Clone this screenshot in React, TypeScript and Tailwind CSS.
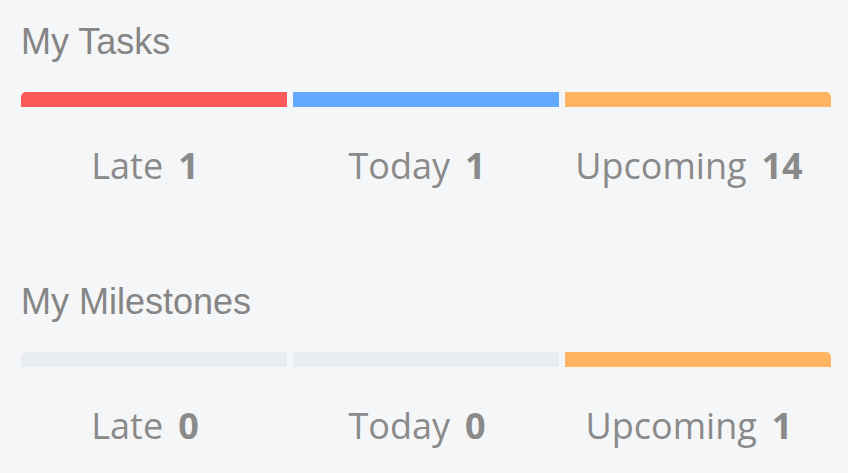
import React from 'react';

interface Bucket {
  label: string;
  count: number;
  color: string;
}

interface Section {
  title: string;
  buckets: Bucket[];
}

const sections: Section[] = [
  {
    title: 'My Tasks',
    buckets: [
      { label: 'Late', count: 1, color: 'bg-[#ff5a5a]' },
      { label: 'Today', count: 1, color: 'bg-[#63a9ff]' },
      { label: 'Upcoming', count: 14, color: 'bg-[#ffb562]' },
    ],
  },
  {
    title: 'My Milestones',
    buckets: [
      { label: 'Late', count: 0, color: 'bg-[#e9ecf0]' },
      { label: 'Today', count: 0, color: 'bg-[#e9ecf0]' },
      { label: 'Upcoming', count: 1, color: 'bg-[#ffb562]' },
    ],
  },
];

function SummaryBlock({ section }: { section: Section }) {
  return (
    <div className="flex h-[260px] flex-col">
      <h2 className="mt-[24px] text-[36px] leading-none text-[#858585] font-['Liberation_Sans',Arial,sans-serif]">
        {section.title}
      </h2>

      {/* progress strip */}
      <div className="mt-[32px] flex gap-[6px]">
        {section.buckets.map((b, i) => (
          <div
            key={b.label}
            className={
              'h-[15px] flex-1 ' +
              b.color +
              (i === 0 ? ' rounded-tl-[5px]' : '') +
              (i === section.buckets.length - 1 ? ' rounded-tr-[5px]' : '')
            }
          />
        ))}
      </div>

      <div className="mt-[41px] flex gap-[6px]">
        {section.buckets.map((b) => (
          <div
            key={b.label}
            className="flex flex-1 justify-center pr-[18px] text-[36px] leading-none text-[#8a8a8a] font-['Open_Sans',sans-serif]"
          >
            <span>{b.label}</span>
            <span className="ml-[15px] font-bold">{b.count}</span>
          </div>
        ))}
      </div>
    </div>
  );
}

export default function App() {
  return (
    <div className="h-[473px] w-[848px] overflow-hidden bg-[#f5f6f8] pl-[21px] pr-[17px]">
      {sections.map((s) => (
        <SummaryBlock key={s.title} section={s} />
      ))}
    </div>
  );
}
